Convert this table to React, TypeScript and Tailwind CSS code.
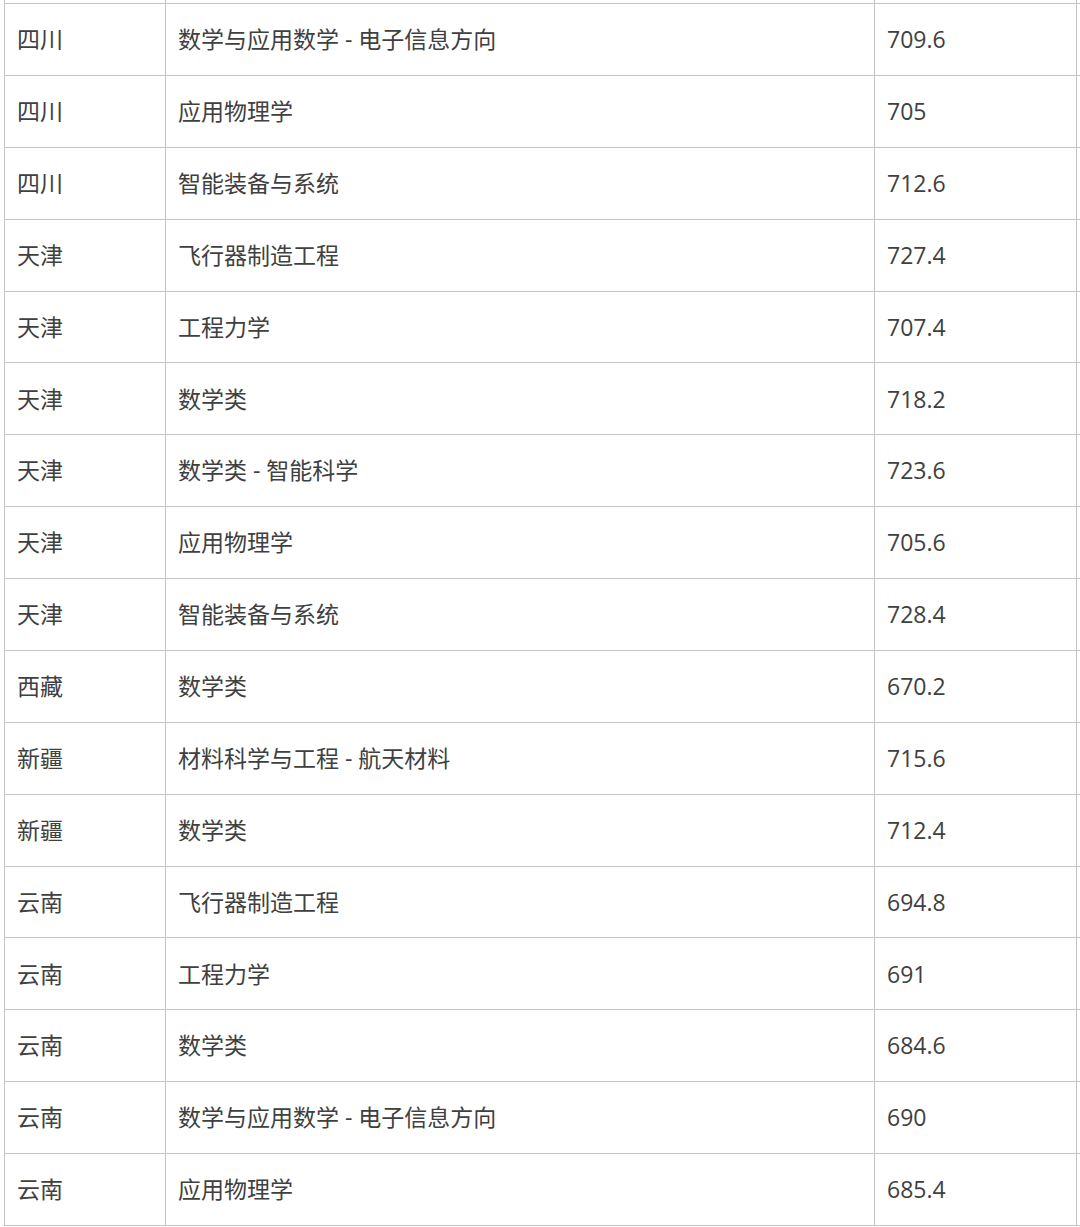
const rows: [string, string, string][] = [
  ["四川", "数学与应用数学 - 电子信息方向", "709.6"],
  ["四川", "应用物理学", "705"],
  ["四川", "智能装备与系统", "712.6"],
  ["天津", "飞行器制造工程", "727.4"],
  ["天津", "工程力学", "707.4"],
  ["天津", "数学类", "718.2"],
  ["天津", "数学类 - 智能科学", "723.6"],
  ["天津", "应用物理学", "705.6"],
  ["天津", "智能装备与系统", "728.4"],
  ["西藏", "数学类", "670.2"],
  ["新疆", "材料科学与工程 - 航天材料", "715.6"],
  ["新疆", "数学类", "712.4"],
  ["云南", "飞行器制造工程", "694.8"],
  ["云南", "工程力学", "691"],
  ["云南", "数学类", "684.6"],
  ["云南", "数学与应用数学 - 电子信息方向", "690"],
  ["云南", "应用物理学", "685.4"],
];

const cols = "grid grid-cols-[162px_709px_202px]";

export default function App() {
  return (
    <div
      className="min-h-[1227px] w-[1080px] overflow-hidden bg-white pl-1 text-[23px] text-[#404040]"
      style={{ fontFamily: '"Open Sans", "Noto Sans CJK SC", sans-serif' }}
    >
      <div className={`${cols} h-[3px]`}>
        <div className="border-x border-[#c4c4c4]" />
        <div className="border-r border-[#c4c4c4]" />
        <div className="border-r border-[#c4c4c4]" />
      </div>
      <div className="border-t border-[#c4c4c4]">
        {rows.map(([prov, major, score], i) => (
          <div key={i} className={`${cols} h-[71.875px] border-b border-[#c4c4c4]`}>
            <div className="flex items-center border-x border-[#c4c4c4] pl-3">{prov}</div>
            <div className="flex items-center border-r border-[#c4c4c4] pl-3">{major}</div>
            <div className="flex items-center border-r border-[#c4c4c4] pl-3">{score}</div>
          </div>
        ))}
      </div>
    </div>
  );
}
